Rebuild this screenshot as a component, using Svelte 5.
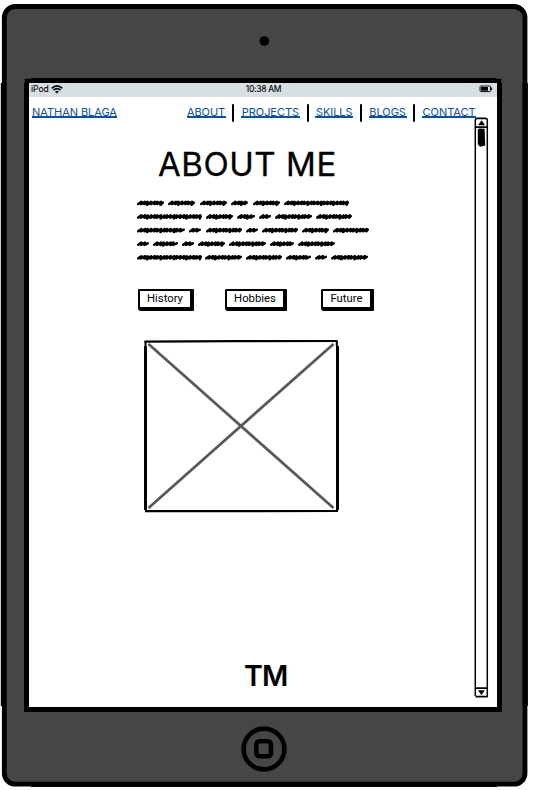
<script>
  const sections = [
    { name: 'ABOUT', width: 39 },
    { name: 'PROJECTS', width: 59 },
    { name: 'SKILLS', width: 38 },
    { name: 'BLOGS', width: 38 },
    { name: 'CONTACT', width: 54 }
  ];
  const buttons = [
    { label: 'History', width: 56, gap: 0 },
    { label: 'Hobbies', width: 62, gap: 31 },
    { label: 'Future', width: 53, gap: 34 }
  ];
  // start and end of every scribbled word, line by line
  const lines = [
    [[0, 27], [31, 58], [63, 90], [94, 111], [116, 143], [147, 212]],
    [[0, 65], [69, 96], [100, 118], [122, 134], [138, 175], [179, 215]],
    [[0, 48], [52, 64], [69, 105], [109, 121], [125, 161], [165, 192], [196, 232]],
    [[0, 12], [16, 41], [45, 57], [61, 88], [92, 129], [133, 157], [161, 198]],
    [[0, 65], [68, 105], [109, 145], [149, 174], [178, 190], [194, 231]]
  ];
  function scribble([a, b], row) {
    const y = 5.1 + row * 13.6;
    let d = `M${a + 1.2} ${y + 0.9}`;
    let i = 0;
    for (let x = a + 2; x < b - 4; x += i % 3 === 1 ? 2.6 : 3.6, i++) {
      const dip = i % 4 === 2 ? 0.7 : 0;
      d += `L${(x + 2.4).toFixed(1)} ${(y - 1.3).toFixed(1)}L${(x + 1.9).toFixed(1)} ${(y + 1 + dip).toFixed(1)}`;
    }
    return d + `L${b - 1.2} ${y - 0.6}`;
  }
</script>

<main class="device">
  <svg class="frame" width="533" height="790" viewBox="0 0 533 790">
    <rect x="4.3" y="6.5" width="520.7" height="777.7" rx="11" fill="#464646" stroke="#000" stroke-width="4.8" />
    <path d="M3.5 83V706M525.2 83V706" stroke="#000" stroke-width="5.4" />
    <path d="M31 784.7H497" stroke="#000" stroke-width="4.8" />
    <rect x="24" y="78" width="478" height="634" />
    <path d="M24 78h7v1h-6v4h-1zM496 78h6v5h-1v-4h-5z" fill="#333" />
    <circle cx="264.3" cy="41" r="4.8" />
  </svg>

  <section class="screen">
    <div class="status">
      <div class="carrier">
        <span>iPod</span>
        <svg width="12" height="9" viewBox="0 0 12 9" fill="none" stroke="#000" stroke-width="1.6">
          <path d="M.7 3.3Q6-1.4 11.3 3.3M2.5 5.1Q6 2 9.5 5.1" />
          <path d="M4 6.4Q6 4.9 8 6.4L6 8.4Z" fill="#000" stroke="none" />
        </svg>
      </div>
      <span class="time">10:38 AM</span>
      <svg class="battery" width="14" height="8" viewBox="0 0 14 8">
        <rect x="1" y="1" width="10.5" height="5.6" rx=".8" fill="#d7dfe2" stroke="#111" />
        <path d="M2 2H9V5.7H2Z" />
        <path d="M12.6 2.5V5.2" stroke="#111" />
      </svg>
    </div>

    <header>
      <a class="brand" href="#home">NATHAN BLAGA</a>
      <nav>
        {#each sections as s, i}
          {#if i}<i></i>{/if}
          <a href="#{s.name.toLowerCase()}" style:width="{s.width}px">{s.name}</a>
        {/each}
      </nav>
    </header>

    <h1>ABOUT ME</h1>

    <svg class="copy" width="234" height="66" viewBox="0 0 234 66">
      {#each lines as line, row}
        {#each line as word}
          <path d={scribble(word, row)} />
        {/each}
      {/each}
    </svg>

    <div class="buttons">
      {#each buttons as b}
        <button style:width="{b.width}px" style:margin-left="{b.gap}px">{b.label}</button>
      {/each}
    </div>

    <svg class="image" width="196" height="174" viewBox="0 0 196 174" fill="none" stroke="#000">
      <path d="M5.5 5L190.5 169M190.5 5L5.5 169" stroke="#595959" stroke-width="2.8" />
      <path d="M1.5 2.6L90 2.2L194.5 2M2 172.2L195 172" stroke-width="2.2" />
      <path d="M2.5 2V7M193.8 2V7" stroke-width="2" />
      <path d="M2.5 7V171M194.5 7V171" stroke-width="3" />
    </svg>

    <footer>TM</footer>

    <svg class="scrollbar" width="15" height="582" viewBox="0 0 15 582" fill="none" stroke="#000">
      <path d="M1.3 3V579M13.3 3V580" stroke-width="1.5" />
      <path d="M1.3 3Q1.4 1.4 3 1.3H11.5Q13.3 1.4 13.3 3M1 10.2H13.5M1.3 571.2H13.5M1.5 579.7H13.5" stroke-width="1.7" />
      <path d="M4 8.3L7.7 3.3L11 8.3ZM4 573.3H10.8L7.4 578.2Z" fill="#000" stroke="none" />
      <path d="M4.4 13L5.5 12.2L10 12.4L10.6 28L6.2 29L4.4 27Z" fill="#000" stroke-width="1.2" />
    </svg>
  </section>

  <svg class="home" width="46" height="46" viewBox="0 0 46 46" fill="none" stroke="#000" stroke-width="4.6">
    <circle cx="23" cy="23" r="20.4" />
    <rect x="15.4" y="15.2" width="14.6" height="15" rx="3" />
  </svg>
</main>

<style>
  :global(body) { background: #fff; overflow: hidden; }
  .device {
    position: relative;
    box-sizing: border-box;
    width: 533px;
    height: 790px;
    padding: 83px 36px 0 29px;
    font-family: Inter, "Liberation Sans", sans-serif;
    color: #000;
  }
  .frame { position: absolute; left: 0; top: 0; }
  .screen {
    position: relative;
    display: flex;
    flex-direction: column;
    width: 468px;
    height: 624px;
    background: #fff;
  }
  .status {
    display: grid;
    grid-template-columns: 1fr auto 1fr;
    align-items: center;
    box-sizing: border-box;
    height: 14px;
    padding: 0 4px 2px 2px;
    background: #d7dfe2;
    font-size: 8.5px;
    line-height: 12px;
    -webkit-text-stroke: 0.1px #000;
  }
  .carrier { display: flex; align-items: center; gap: 2px; }
  .time { padding-left: 3px; letter-spacing: -0.3px; }
  .battery { justify-self: end; }
  header {
    display: flex;
    justify-content: space-between;
    margin: 7px 21px 0 3px;
    height: 18px;
  }
  nav { display: flex; }
  a {
    display: block;
    box-sizing: border-box;
    height: 14px;
    border-bottom: 2px solid #0b529c;
    color: #0b529c;
    font-size: 11px;
    line-height: 16px;
    letter-spacing: -0.05px;
    text-align: center;
    text-decoration: none;
    white-space: nowrap;
  }
  .brand { width: 85px; }
  i { width: 2px; height: 18px; margin: 0 6.7px; border-radius: 1px; background: #000; }
  h1 {
    margin: 22px 0 0 129px;
    height: 40px;
    font-size: 33px;
    font-weight: 400;
    line-height: 40px;
    letter-spacing: 0.55px;
    white-space: nowrap;
    -webkit-text-stroke: 0.3px #000;
    paint-order: stroke;
    stroke-linejoin: round;
  }
  .copy { margin: 14px 0 0 108px; }
  .copy path {
    fill: none;
    stroke: #000;
    stroke-width: 2.5;
    stroke-linejoin: round;
    stroke-linecap: round;
  }
  .buttons {
    display: flex;
    margin: 25px 0 0 109px;
  }
  button {
    box-sizing: border-box;
    height: 22px;
    padding: 0;
    border: 2px solid #000;
    border-right-width: 4px;
    border-bottom-width: 4px;
    border-radius: 1px 1px 1px 3px;
    background: #fff;
    color: #000;
    font: 11.3px/16px Roboto, "Liberation Sans", sans-serif;
    white-space: nowrap;
  }
  .image { margin: 28px 0 0 114px; }
  footer {
    margin: 146px 0 0 215px;
    height: 34px;
    font-size: 28.5px;
    font-weight: 600;
    line-height: 34px;
    letter-spacing: -0.9px;
  }
  .scrollbar { position: absolute; left: 445px; top: 34px; }
  .home { position: relative; display: block; margin: 19px 0 0 212px; }
</style>
